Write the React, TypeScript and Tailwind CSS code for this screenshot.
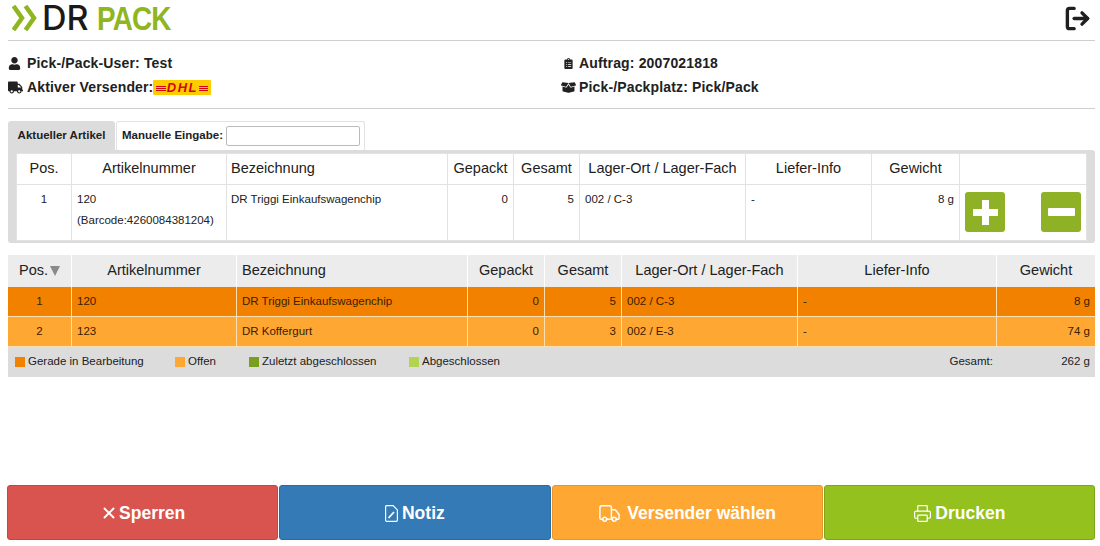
import { FaUser, FaTruck, FaClipboardList, FaBoxOpen } from 'react-icons/fa';
import { X, LogOut, Truck, Printer } from 'lucide-react';

const topCols = ['w-[55px]', 'w-[155px]', 'w-[221px]', 'w-[66px]', 'w-[66px]', 'w-[166px]', 'w-[126px]', 'w-[88px]', 'w-[127px]'];
const topHead = ['Pos.', 'Artikelnummer', 'Bezeichnung', 'Gepackt', 'Gesamt', 'Lager-Ort / Lager-Fach', 'Liefer-Info', 'Gewicht', ''];

const listCols = ['w-[64px]', 'w-[165px]', 'w-[231px]', 'w-[77px]', 'w-[77px]', 'w-[176px]', 'w-[199px]', 'w-[98px]'];

const rows = [
  { pos: 1, nr: '120', name: 'DR Triggi Einkaufswagenchip', packed: 0, total: 5, place: '002 / C-3', weight: '8 g', bg: 'bg-[#f28100]' },
  { pos: 2, nr: '123', name: 'DR Koffergurt', packed: 0, total: 3, place: '002 / E-3', weight: '74 g', bg: 'bg-[#ffa733]' },
];

const legend = [
  { label: 'Gerade in Bearbeitung', color: 'bg-[#f28100]', width: 'w-[160px]' },
  { label: 'Offen', color: 'bg-[#ffa733]', width: 'w-[74px]' },
  { label: 'Zuletzt abgeschlossen', color: 'bg-[#7a9e1f]', width: 'w-[160px]' },
  { label: 'Abgeschlossen', color: 'bg-[#b2d453]', width: 'w-[100px]' },
];

function DhlLogo() {
  return (
    <span className="relative inline-flex h-[15px] w-[58px] items-center justify-center overflow-hidden rounded-[1px] bg-[#fc0]">
      <span className="absolute left-[3px] right-[3px] top-[6px] h-[1px] bg-[#d40511]" />
      <span className="absolute left-[3px] right-[3px] top-[8px] h-[1px] bg-[#d40511]" />
      <span className="absolute left-[3px] right-[3px] top-[10px] h-[1px] bg-[#d40511]" />
      <span className="relative bg-[#fc0] px-[1px] text-[13px] font-bold italic leading-none tracking-[1.5px] text-[#d40511]">DHL</span>
    </span>
  );
}

function Logo() {
  return (
    <div className="flex items-center gap-[4px]">
      <svg width="26" height="26" viewBox="0 0 26 26" fill="none" stroke="#8fb51f" strokeWidth="4.5">
        <path d="M1.5 1l8.5 12-8.5 12" />
        <path d="M13.5 1l8.5 12-8.5 12" />
      </svg>
      <div className="flex items-center gap-[8px] text-[34px] leading-[34px]">
        <span className="font-medium text-[#1a1a1a] [font-family:Inter,sans-serif]">DR</span>
        <span className="w-[74px] origin-left font-bold tracking-[-1px] text-[#8fb51f] [transform:scaleX(0.82)]">PACK</span>
      </div>
    </div>
  );
}

function NoteIcon() {
  return (
    <svg width="13" height="17" viewBox="0 0 13 17" fill="none" stroke="currentColor" strokeWidth="1.2">
      <path d="M1.5.6h6.6l4.3 4.3v10.2a1.3 1.3 0 0 1-1.3 1.3H1.5A1.3 1.3 0 0 1 .6 15.1V1.9A1.3 1.3 0 0 1 1.5.6z" />
      <path d="M3.5 13l5.5-6" strokeWidth="1.8" />
    </svg>
  );
}

function BigButton({ icon, label, className }: { icon: React.ReactNode; label: string; className: string }) {
  return (
    <button className={`flex h-[55px] flex-1 items-center justify-center rounded-[3px] border pt-[1px] text-[17.5px] font-bold text-white ${className}`}>
      {icon}
      {label}
    </button>
  );
}

export default function App() {
  return (
    <div className="h-[546px] w-[1100px] overflow-hidden bg-white text-[#212121] [font-family:'Liberation_Sans',Arial,sans-serif]">
      <header className="ml-[8px] mr-[5px] flex h-[41px] items-center justify-between border-b border-[#cfcfcf] pb-[4px] pl-[4px] pr-[4px]">
        <Logo />
        <LogOut className="size-[27px] text-[#1f1f1f]" strokeWidth={3} />
      </header>

      <section className="ml-[8px] mr-[5px] flex h-[68px] flex-col justify-center gap-[4px] border-b border-[#cfcfcf] pt-[2px] text-[14px] font-bold">
        <div className="flex h-[20px] items-center">
          <div className="flex w-[555px] items-center gap-[6px]">
            <FaUser className="size-[13px]" />
            <span className="tracking-[0.15px]">Pick-/Pack-User: Test</span>
          </div>
          <div className="flex items-center gap-[5px]">
            <FaClipboardList className="size-[11px]" />
            <span className="tracking-[0.15px]">Auftrag: 2007021818</span>
          </div>
        </div>
        <div className="flex h-[20px] items-center">
          <div className="flex w-[553px] items-center gap-[4px]">
            <FaTruck className="size-[15px]" />
            <span className="tracking-[0.15px]">Aktiver Versender:</span>
            <span className="-ml-[4px]"><DhlLogo /></span>
          </div>
          <div className="flex items-center gap-[3px]">
            <FaBoxOpen className="size-[15px]" />
            <span className="tracking-[0.15px]">Pick-/Packplatz: Pick/Pack</span>
          </div>
        </div>
      </section>

      <section className="ml-[8px] mr-[5px] mt-[12px]">
        <div className="flex h-[29px] gap-[1px] text-[11.5px] font-bold">
          <div className="flex w-[107px] items-center justify-center rounded-t-[3px] bg-[#dcdcdc]">Aktueller Artikel</div>
          <div className="flex w-[249px] items-center gap-[3px] rounded-t-[3px] border border-b-0 border-[#e2e2e2] pl-[5px]">
            <span className="whitespace-nowrap">Manuelle Eingabe:</span>
            <input className="h-[20px] w-[134px] rounded-[2px] border border-[#bbb] bg-white" />
          </div>
        </div>
        <div className="h-[93px] rounded-b-[3px] rounded-tr-[3px] bg-[#dcdcdc] pb-[3px] pl-[8px] pr-[9px] pt-[3px]">
          <table className="w-[1070px] table-fixed border-collapse bg-white">
            <thead>
              <tr className="h-[31px] text-[14.5px]">
                {topHead.map((h, i) => (
                  <th key={i} className={`border border-[#e2e2e2] px-[4px] font-normal ${topCols[i]} ${h === 'Bezeichnung' ? 'text-left' : 'text-center'}`}>{h}</th>
                ))}
              </tr>
            </thead>
            <tbody>
              <tr className="h-[56px] align-top text-[11.5px] leading-[21px]">
                <td className="border border-[#e2e2e2] pt-[4px] text-center">1</td>
                <td className="whitespace-nowrap border border-[#e2e2e2] px-[5px] pt-[4px]">120<br />(Barcode:4260084381204)</td>
                <td className="border border-[#e2e2e2] px-[4px] pt-[4px]">DR Triggi Einkaufswagenchip</td>
                <td className="border border-[#e2e2e2] px-[5px] pt-[4px] text-right">0</td>
                <td className="border border-[#e2e2e2] px-[5px] pt-[4px] text-right">5</td>
                <td className="border border-[#e2e2e2] px-[5px] pt-[4px]">002 / C-3</td>
                <td className="border border-[#e2e2e2] px-[5px] pt-[4px]">-</td>
                <td className="border border-[#e2e2e2] px-[5px] pt-[4px] text-right">8 g</td>
                <td className="border border-[#e2e2e2] py-[7px] pl-[5px] pr-[5px]">
                  <div className="flex justify-between">
                    <button className="flex size-[40px] items-center justify-center rounded-[3px] bg-[#8fb125]">
                      <svg width="27" height="27" viewBox="0 0 27 27" fill="#fff"><path d="M10 1h7v9h9v7h-9v9h-7v-9H1v-7h9z" /></svg>
                    </button>
                    <button className="flex size-[40px] items-center justify-center rounded-[3px] bg-[#8fb125]">
                      <svg width="27" height="8" viewBox="0 0 27 8" fill="#fff"><rect width="27" height="8" rx="1" /></svg>
                    </button>
                  </div>
                </td>
              </tr>
            </tbody>
          </table>
        </div>
      </section>

      <section className="ml-[8px] mr-[5px] mt-[12px]">
        <table className="w-full table-fixed border-separate border-spacing-0">
          <thead>
            <tr className="h-[32px] bg-[#ececec] text-[14.5px]">
              <th className={`border-r border-white font-normal ${listCols[0]}`}>
                <span className="inline-flex items-center gap-[2px]">Pos.
                  <svg width="10" height="10" viewBox="0 0 10 10" fill="#8a8a8a"><path d="M0 0h10L5 10z" /></svg>
                </span>
              </th>
              <th className={`border-r border-white font-normal ${listCols[1]}`}>Artikelnummer</th>
              <th className={`border-r border-white px-[5px] text-left font-normal ${listCols[2]}`}>Bezeichnung</th>
              <th className={`border-r border-white font-normal ${listCols[3]}`}>Gepackt</th>
              <th className={`border-r border-white font-normal ${listCols[4]}`}>Gesamt</th>
              <th className={`border-r border-white font-normal ${listCols[5]}`}>Lager-Ort / Lager-Fach</th>
              <th className={`border-r border-white font-normal ${listCols[6]}`}>Liefer-Info</th>
              <th className={`font-normal ${listCols[7]}`}>Gewicht</th>
            </tr>
          </thead>
          <tbody className="text-[11.5px] text-[#3a2000]">
            {rows.map((r) => (
              <tr key={r.pos} className={`h-[30px] ${r.bg}`}>
                <td className="border-b border-r border-[#ffe0b0] text-center">{r.pos}</td>
                <td className="border-b border-r border-[#ffe0b0] px-[5px]">{r.nr}</td>
                <td className="border-b border-r border-[#ffe0b0] px-[5px]">{r.name}</td>
                <td className="border-b border-r border-[#ffe0b0] px-[5px] text-right">{r.packed}</td>
                <td className="border-b border-r border-[#ffe0b0] px-[5px] text-right">{r.total}</td>
                <td className="border-b border-r border-[#ffe0b0] px-[5px]">{r.place}</td>
                <td className="border-b border-r border-[#ffe0b0] px-[5px]">-</td>
                <td className="border-b border-[#ffe0b0] px-[5px] text-right">{r.weight}</td>
              </tr>
            ))}
          </tbody>
        </table>
        <div className="flex h-[30px] items-center bg-[#dcdcdc] pl-[7px] pr-[5px] text-[11.5px]">
          {legend.map((l) => (
            <div key={l.label} className={`flex items-center gap-[3px] ${l.width}`}>
              <span className={`size-[10px] ${l.color}`} />
              {l.label}
            </div>
          ))}
          <span className="ml-auto">Gesamt:</span>
          <span className="w-[97px] text-right">262 g</span>
        </div>
      </section>

      <footer className="ml-[7px] mr-[5px] mt-[108px] flex gap-[1px]">
        <BigButton icon={<X className="mr-[1px] size-[18px]" strokeWidth={2.5} />} label="Sperren" className="border-[#c9433f] bg-[#d9534f]" />
        <BigButton icon={<span className="mr-[4px]"><NoteIcon /></span>} label="Notiz" className="border-[#2b6ba3] bg-[#337ab7]" />
        <BigButton icon={<Truck className="mr-[6px] size-[23px]" strokeWidth={1.5} />} label="Versender wählen" className="border-[#e8962c] bg-[#ffa733] text-[#fff6e6]" />
        <BigButton icon={<Printer className="mr-[3px] size-[19px]" strokeWidth={1.5} />} label="Drucken" className="border-[#7fa51a] bg-[#95c11f]" />
      </footer>
    </div>
  );
}
